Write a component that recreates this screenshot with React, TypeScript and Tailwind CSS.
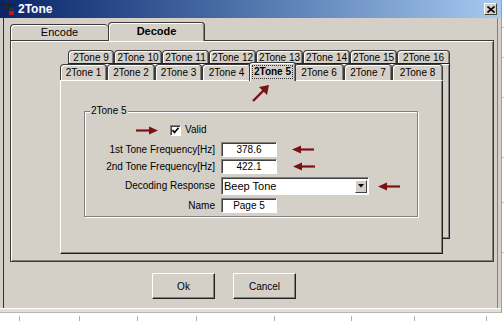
import React from "react";

const backTabs: [string, number][] = [
  ["2Tone 9", 46],
  ["2Tone 10", 48],
  ["2Tone 11", 47],
  ["2Tone 12", 47],
  ["2Tone 13", 47],
  ["2Tone 14", 47],
  ["2Tone 15", 47],
  ["2Tone 16", 53],
];

const frontTabs: [string, number][] = [
  ["2Tone 1", 47],
  ["2Tone 2", 48],
  ["2Tone 3", 47],
  ["2Tone 4", 49],
  ["2Tone 5", 43],
  ["2Tone 6", 50],
  ["2Tone 7", 48],
  ["2Tone 8", 51],
];

function ArrowRight() {
  return (
    <svg width="22" height="9" viewBox="0 0 22 9" className="shrink-0">
      <line x1="0" y1="4.5" x2="15" y2="4.5" stroke="#7a1214" strokeWidth="2.2" />
      <polygon points="13,0.5 22,4.5 13,8.5" fill="#7a1214" />
    </svg>
  );
}

function ArrowLeft() {
  return (
    <svg width="22" height="9" viewBox="0 0 22 9" className="shrink-0">
      <line x1="7" y1="4.5" x2="22" y2="4.5" stroke="#7a1214" strokeWidth="2.2" />
      <polygon points="9,0.5 0,4.5 9,8.5" fill="#7a1214" />
    </svg>
  );
}

function TitleBar() {
  return (
    <div className="h-[18px] flex items-center bg-gradient-to-r from-[#0a246a] to-[#a6caf0] pl-[2px] pr-[4px]">
      <svg width="14" height="14" viewBox="0 0 14 14" className="shrink-0">
        <rect x="0" y="1" width="5" height="2" fill="#222" />
        <rect x="6" y="1" width="2" height="4" fill="#222" />
        <rect x="9" y="2" width="4" height="2" fill="#222" />
        <rect x="1" y="6" width="6" height="1" fill="#222" />
        <rect x="8" y="6" width="4" height="2" fill="#333" />
        <rect x="7" y="9" width="5" height="4" fill="#c81010" />
        <rect x="3" y="11" width="3" height="2" fill="#222" />
      </svg>
      <span className="ml-[2px] text-white font-bold text-[12px] leading-none">2Tone</span>
      <div className="flex-1" />
      <div className="w-[13px] h-[12px] bg-[#d4d0c8] border border-t-white border-l-white border-r-[#404040] border-b-[#404040] flex items-center justify-center">
        <svg width="8" height="7" viewBox="0 0 8 7">
          <path d="M0.5 0.5 L7.5 6.5 M7.5 0.5 L0.5 6.5" stroke="#000" strokeWidth="1.6" />
        </svg>
      </div>
    </div>
  );
}

function Tab({
  label,
  w,
  h,
  selected,
}: {
  label: string;
  w: number;
  h: number;
  selected?: boolean;
}) {
  if (selected) {
    return (
      <div
        className="relative z-20 -mx-[2px] -mb-px flex items-start justify-center bg-[#d4d0c8] rounded-t-[3px] border-t border-l border-r border-[#3a3a3a] shadow-[inset_1px_1px_0_#fff,inset_-1px_0_0_#808080] pt-[2px] whitespace-nowrap"
        style={{ width: w + 4, height: h + 3 }}
      >
        <span className="font-bold border border-dotted border-[#333] px-[1px] leading-[12px]">{label}</span>
      </div>
    );
  }
  return (
    <div
      className="relative flex items-center justify-center bg-[#d4d0c8] rounded-t-[4px] border-t border-l border-r border-[#3a3a3a] shadow-[inset_1px_1px_0_#fff,inset_-1px_0_0_#808080] leading-none whitespace-nowrap"
      style={{ width: w, height: h }}
    >
      {label}
    </div>
  );
}

function Field({ value, w, center = true }: { value: string; w: number; center?: boolean }) {
  return (
    <div
      className={`h-[15px] bg-white border border-t-[#808080] border-l-[#808080] border-b-white border-r-white shadow-[inset_1px_1px_0_#404040] flex items-center leading-none ${
        center ? "justify-center" : "pl-[3px]"
      }`}
      style={{ width: w }}
    >
      {value}
    </div>
  );
}

function Row({ label, children, mt }: { label: string; children: React.ReactNode; mt: string }) {
  return (
    <div className={`flex items-center ${mt}`}>
      <div className="w-[130px] text-right leading-none whitespace-nowrap">{label}</div>
      <div className="ml-[6px] flex items-center">{children}</div>
    </div>
  );
}

function Button({ label }: { label: string }) {
  return (
    <div className="w-[63px] h-[26px] bg-[#d4d0c8] border border-t-white border-l-white border-r-[#202020] border-b-[#202020] shadow-[inset_-1px_-1px_0_#808080] flex items-center justify-center">
      {label}
    </div>
  );
}

export default function App() {
  return (
    <div className="w-[504px] h-[321px] bg-white overflow-hidden flex flex-col font-['Liberation_Sans',Arial,sans-serif] text-[10px] text-black">
      <div className="flex h-[313px]">
        <div className="w-[501px] h-[313px] bg-[#d4d0c8] flex flex-col">
          <TitleBar />
          <div className="flex-1 ml-[3px] mr-[3px] border-l border-[#303030] border-r border-r-[#808080] flex flex-col">
            {/* outer tabs */}
            <div className="mt-[4px] ml-[6px] flex items-end h-[18px] text-[11px]">
              <div className="w-[98px] h-[16px] flex items-center justify-center bg-[#d4d0c8] rounded-t-[4px] border-t border-l border-[#3a3a3a] shadow-[inset_1px_1px_0_#fff] leading-none">
                Encode
              </div>
              <div className="relative z-10 -mb-px w-[97px] h-[19px] flex items-center justify-center bg-[#d4d0c8] rounded-t-[4px] border-t border-l border-r border-[#3a3a3a] shadow-[inset_1px_1px_0_#fff,inset_-1px_0_0_#808080] font-bold leading-none pb-[1px]">
                Decode
              </div>
            </div>
            {/* outer panel */}
            <div className="ml-[6px] w-[484px] h-[222px] border border-[#3a3a3a] shadow-[inset_1px_1px_0_#fff,inset_-1px_-1px_0_#808080]">
              <div className="ml-[49px] mt-[9px] w-[390px]">
                <div className="ml-[8px] flex items-end h-[14px]">
                  {backTabs.map(([l, w]) => (
                    <Tab key={l} label={l} w={w} h={14} />
                  ))}
                </div>
                <div className="relative">
                  <div className="absolute left-[8px] -top-px w-[382px] h-[176px] border border-[#202020] shadow-[inset_1px_1px_0_#fff,inset_-1px_-1px_0_#808080] bg-[#d4d0c8]" />
                  <div className="relative z-10 flex items-end h-[16px]">
                    {frontTabs.map(([l, w]) => (
                      <Tab key={l} label={l} w={w} h={16} selected={l === "2Tone 5"} />
                    ))}
                  </div>
                  <div className="relative w-[383px] h-[174px] bg-[#d4d0c8] border border-[#202020] border-t-white border-l-white shadow-[inset_-1px_-1px_0_#808080]">
                    <svg width="18" height="17" viewBox="0 0 18 17" className="absolute left-[191px] top-[4px]">
                      <line x1="1" y1="16" x2="12" y2="5" stroke="#7a1214" strokeWidth="2.4" />
                      <polygon points="7,2 17,0 15,10" fill="#7a1214" />
                    </svg>
                    {/* group box */}
                    <div className="relative ml-[23px] mt-[30px] w-[334px] h-[106px] border border-[#808080] shadow-[1px_1px_0_#fff,inset_1px_1px_0_#fff]">
                      <span className="absolute left-[5px] -top-[7px] px-[1px] bg-[#d4d0c8] leading-[12px] whitespace-nowrap">2Tone 5</span>
                      <div className="flex items-center mt-[12px] h-[12px]">
                        <div className="ml-[51px]">
                          <ArrowRight />
                        </div>
                        <div className="ml-[12px] w-[11px] h-[11px] bg-white border border-t-[#808080] border-l-[#808080] border-b-white border-r-white shadow-[inset_1px_1px_0_#404040] flex items-center justify-center">
                          <svg width="7" height="7" viewBox="0 0 7 7">
                            <path d="M0.5 3 L2.5 5.5 L6.5 0.8" stroke="#000" strokeWidth="1.6" fill="none" />
                          </svg>
                        </div>
                        <span className="ml-[4px] leading-none">Valid</span>
                      </div>
                      <Row label="1st Tone Frequency[Hz]" mt="mt-[6px]">
                        <Field value="378.6" w={56} />
                        <div className="ml-[15px]">
                          <ArrowLeft />
                        </div>
                      </Row>
                      <Row label="2nd Tone Frequency[Hz]" mt="mt-[2px]">
                        <Field value="422.1" w={56} />
                        <div className="ml-[16px]">
                          <ArrowLeft />
                        </div>
                      </Row>
                      <Row label="Decoding Response" mt="mt-[3px]">
                        <div className="w-[148px] h-[18px] bg-white border border-t-[#808080] border-l-[#808080] border-b-white border-r-white shadow-[inset_1px_1px_0_#404040] flex items-center pl-[2px] pr-px">
                          <span className="flex-1 leading-none text-[11px]">Beep Tone</span>
                          <div className="w-[12px] h-[13px] bg-[#d4d0c8] border border-t-white border-l-white border-r-[#404040] border-b-[#404040] flex items-center justify-center">
                            <svg width="6" height="4" viewBox="0 0 6 4">
                              <polygon points="0,0 6,0 3,3.5" fill="#000" />
                            </svg>
                          </div>
                        </div>
                        <div className="ml-[9px]">
                          <ArrowLeft />
                        </div>
                      </Row>
                      <Row label="Name" mt="mt-[3px]">
                        <Field value="Page 5" w={56} />
                      </Row>
                    </div>
                  </div>
                </div>
              </div>
            </div>
            {/* buttons */}
            <div className="mt-[11px] ml-[148px] flex gap-[18px]">
              <Button label="Ok" />
              <Button label="Cancel" />
            </div>
          </div>
          <div className="h-[5px] bg-[#e2dfd8] border-t border-white border-b border-b-[#b8b5ae]" />
        </div>
        <div className="flex-1 flex flex-col border-l border-[#a0a0a0]">
          <div className="h-[28px] border-b border-[#c8c8c8]" />
          <div className="h-[30px] border-b border-[#c8c8c8]" />
          <div className="h-[40px] border-b border-[#c8c8c8]" />
          <div className="h-[60px] border-b border-[#c8c8c8]" />
          <div className="h-[45px] border-b border-[#c8c8c8]" />
          <div className="h-[50px] border-b border-[#c8c8c8]" />
        </div>
      </div>
      <div className="flex h-[8px] pt-[3px]">
        {[20, 60, 58, 59, 78, 77, 63, 72].map((w, i) => (
          <div key={i} className="border-r border-[#b0b0b0]" style={{ width: w }} />
        ))}
      </div>
    </div>
  );
}
